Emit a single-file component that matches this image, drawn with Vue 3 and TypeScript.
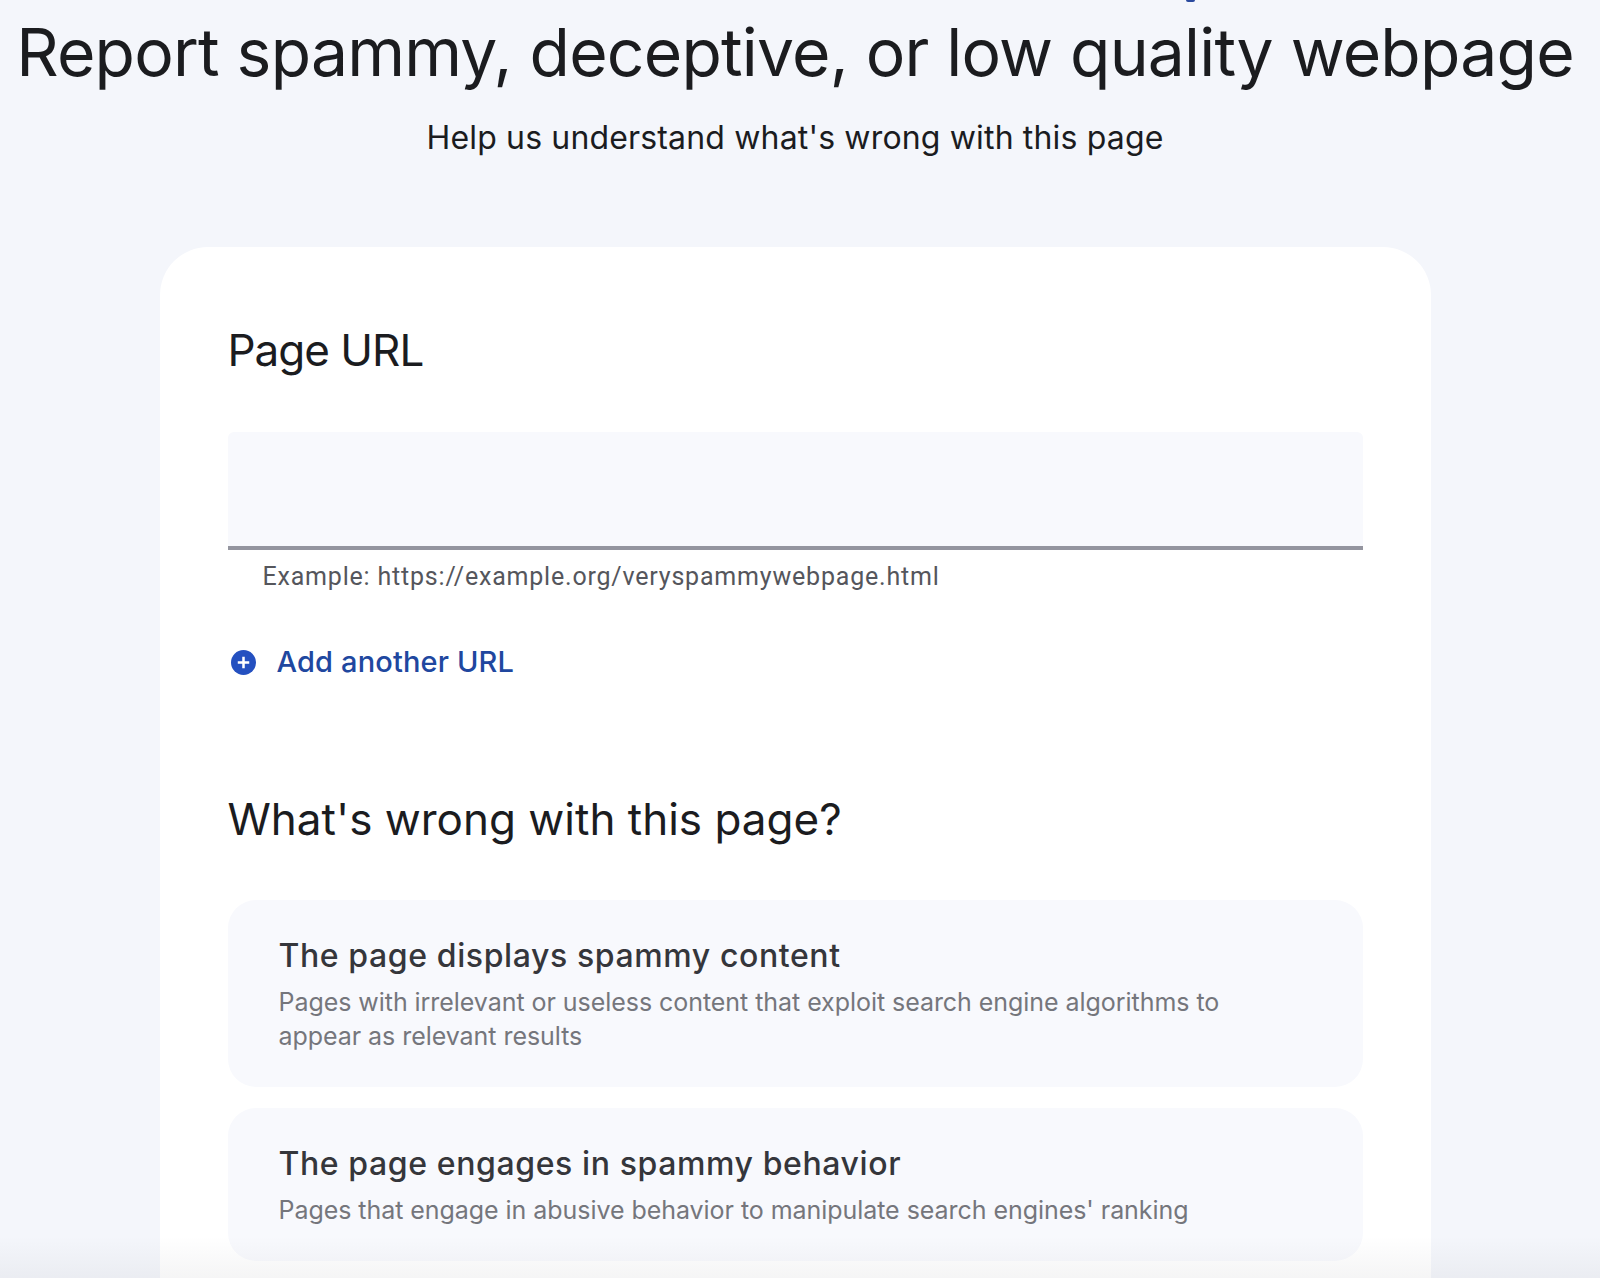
<script setup lang="ts">
interface Reason { title: string; desc: string }
const reasons: Reason[] = [
  { title: 'The page displays spammy content', desc: 'Pages with irrelevant or useless content that exploit search engine algorithms to appear as relevant results' },
  { title: 'The page engages in spammy behavior', desc: "Pages that engage in abusive behavior to manipulate search engines' ranking" },
]
</script>

<template>
  <div class="page">
    <span class="cut-link" />
    <header class="head">
      <h1 class="title">Report spammy, deceptive, or low quality webpage</h1>
      <p class="sub">Help us understand what's wrong with this page</p>
    </header>
    <main class="card">
      <h2 class="section">Page URL</h2>
      <div class="field" />
      <p class="hint">Example: https://example.org/veryspammywebpage.html</p>
      <a class="add">
        <svg class="plus" viewBox="0 0 24 24" width="25" height="25">
          <circle cx="12" cy="12" r="12" fill="#2450c0" />
          <path d="M12 6.5v11M6.5 12h11" stroke="#fff" stroke-width="2.4" fill="none" />
        </svg>
        <span>Add another URL</span>
      </a>
      <h2 class="section second">What's wrong with this page?</h2>
      <div class="reasons">
        <div v-for="r in reasons" :key="r.title" class="reason">
          <div class="reason-title">{{ r.title }}</div>
          <div class="reason-desc">{{ r.desc }}</div>
        </div>
      </div>
    </main>
    <div class="fade" />
  </div>
</template>

<style>
html, body { margin: 0; background: #f4f6fb; overflow: hidden; }
</style>

<style scoped>
.page {
  position: relative;
  height: 1278px;
  overflow: hidden;
  padding-right: 10px;
  background: #f4f6fb;
  font-family: Inter, "Noto Sans", sans-serif;
  color: #1b1c1f;
}
.cut-link {
  position: absolute;
  left: 1186px;
  top: 0;
  width: 9px;
  height: 2px;
  background: #2a4a9e;
  border-radius: 0 0 5px 5px;
}
.head { text-align: center; padding-top: 10px; }
.title {
  margin: 0;
  font-size: 66px;
  line-height: 84px;
  font-weight: 400;
  letter-spacing: -0.8px;
  white-space: nowrap;
}
.sub {
  margin: 22px 0 0;
  font-size: 32px;
  line-height: 44px;
  letter-spacing: 0.16px;
}
.card {
  box-sizing: border-box;
  width: 1271px;
  margin: 87px auto 0;
  height: 1100px;
  padding: 73px 68px 68px;
  background: #fff;
  border-radius: 48px;
}
.section {
  margin: 0;
  font-size: 44px;
  line-height: 60px;
  font-weight: 400;
  letter-spacing: -1px;
}
.field {
  margin-top: 52px;
  height: 114px;
  background: #f8f9fd;
  border-bottom: 4px solid #94959f;
  border-radius: 6px 6px 0 0;
}
.hint {
  margin: 11px 0 0 35px;
  font-family: Roboto, sans-serif;
  font-size: 25px;
  line-height: 32px;
  letter-spacing: 0.8px;
  color: #55565c;
}
.add {
  display: flex;
  align-items: center;
  gap: 21px;
  margin-top: 51px;
  margin-left: 3px;
  font-size: 29px;
  font-weight: 500;
  line-height: 36px;
  letter-spacing: 0.15px;
  color: #20479f;
}
.second { margin-top: 109px; letter-spacing: 0; }
.reasons { margin-top: 51px; display: flex; flex-direction: column; gap: 21px; }
.reason {
  background: #f8f9fd;
  border-radius: 28px;
  padding: 33px 50px 34px 51px;
}
.reason-title {
  font-size: 32px;
  line-height: 46px;
  font-weight: 500;
  letter-spacing: 0.6px;
  color: #35363b;
}
.reason-desc {
  margin-top: 6px;
  font-size: 25px;
  line-height: 34px;
  letter-spacing: -0.05px;
  color: #75767c;
  max-width: 1000px;
}
.fade {
  position: absolute;
  left: 0;
  right: 0;
  bottom: 0;
  height: 42px;
  background: linear-gradient(to bottom, rgba(60, 60, 70, 0), rgba(60, 60, 70, 0.05));
  pointer-events: none;
}
</style>
